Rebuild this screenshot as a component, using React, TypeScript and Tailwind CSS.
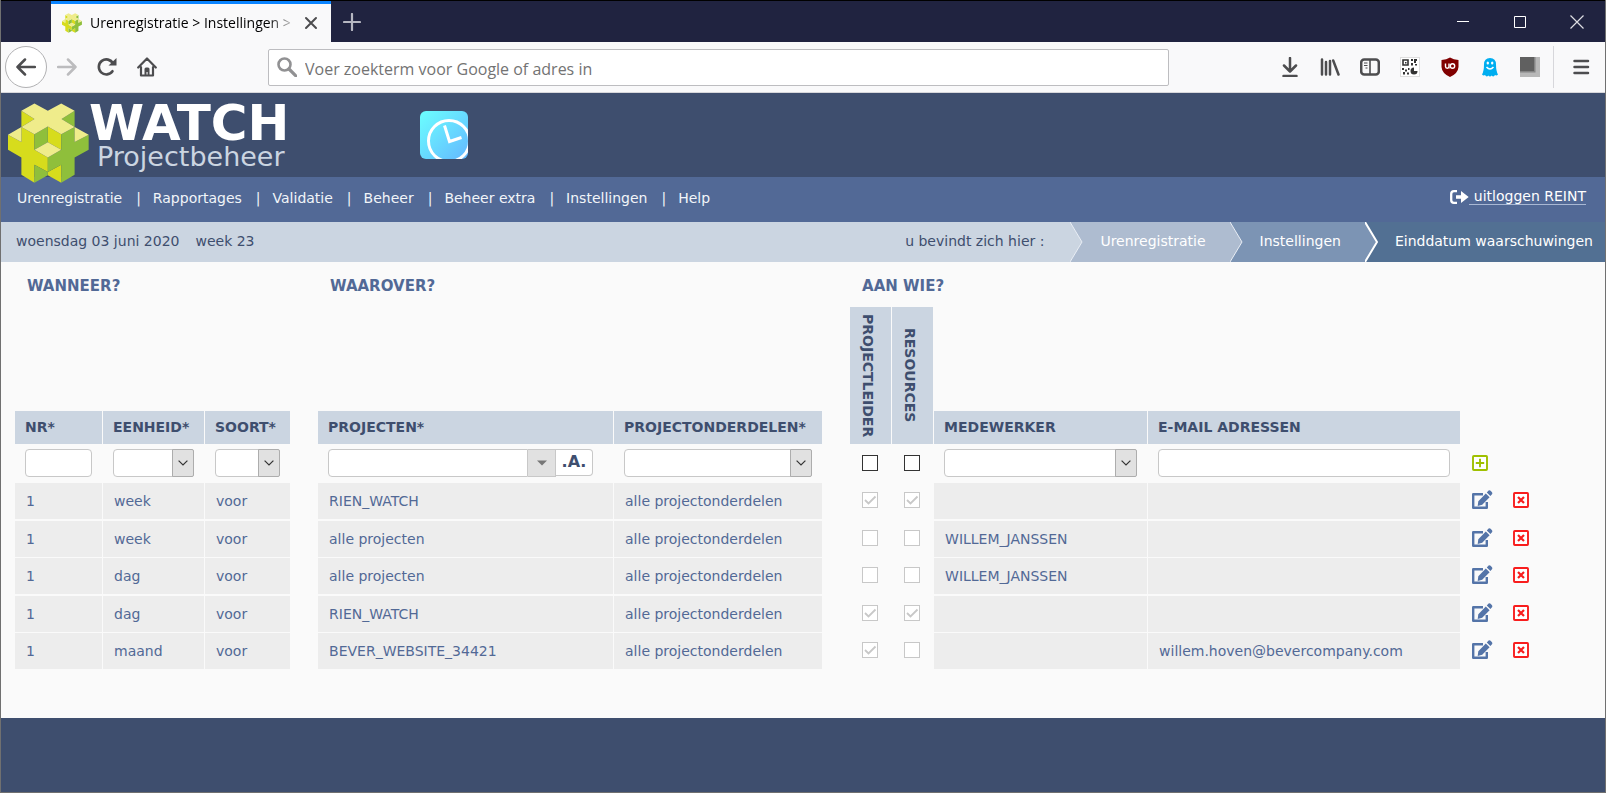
import React from 'react';

interface Rule {
  nr: string;
  unit: string;
  kind: string;
  project: string;
  part: string;
  leader: boolean;
  resources: boolean;
  employee: string;
  email: string;
}

const rules: Rule[] = [
  { nr: '1', unit: 'week', kind: 'voor', project: 'RIEN_WATCH', part: 'alle projectonderdelen', leader: true, resources: true, employee: '', email: '' },
  { nr: '1', unit: 'week', kind: 'voor', project: 'alle projecten', part: 'alle projectonderdelen', leader: false, resources: false, employee: 'WILLEM_JANSSEN', email: '' },
  { nr: '1', unit: 'dag', kind: 'voor', project: 'alle projecten', part: 'alle projectonderdelen', leader: false, resources: false, employee: 'WILLEM_JANSSEN', email: '' },
  { nr: '1', unit: 'dag', kind: 'voor', project: 'RIEN_WATCH', part: 'alle projectonderdelen', leader: true, resources: true, employee: '', email: '' },
  { nr: '1', unit: 'maand', kind: 'voor', project: 'BEVER_WEBSITE_34421', part: 'alle projectonderdelen', leader: true, resources: false, employee: '', email: 'willem.hoven@bevercompany.com' },
];

const menu = ['Urenregistratie', 'Rapportages', 'Validatie', 'Beheer', 'Beheer extra', 'Instellingen', 'Help'];

const Logo: React.FC<{ className: string }> = ({ className }) => (
  <svg viewBox="24 311 242 238" className={className} aria-hidden="true">
    {/* left faces */}
    <path fill="#d7dc1c" d="M64 334L103 358L64 382ZM24 405L64 427V382L103 404V450L143 473V517L103 495V549L64 525V473L24 450ZM143 381L183 404V450L143 428ZM183 495V549L143 526V517Z" />
    {/* right faces */}
    <path fill="#8fbf3b" d="M223 334L184 358L223 382ZM265 405L223 427V382L183 404V450L143 473V517L183 495V549L223 525V473L265 450ZM103 404L143 381V428L103 450ZM103 495L143 517V526L103 549Z" />
    {/* top faces */}
    <path fill="#efec8b" d="M103 312L143 334L183 312L223 334L184 358L223 382L183 404L143 381L103 404L64 382L103 358L64 334ZM24 405L64 382V427ZM265 405L223 382V427ZM103 450L143 428L183 450L143 473Z" />
  </svg>
);

const ClockIcon = () => (
  <svg viewBox="0 0 48 48" className="size-12" aria-hidden="true">
    <defs>
      <linearGradient id="clock" x1="0" y1="0" x2="1" y2="1">
        <stop offset="0" stopColor="#6bffff" />
        <stop offset="1" stopColor="#64b8ff" />
      </linearGradient>
      <clipPath id="clockClip">
        <rect width="48" height="48" rx="6" />
      </clipPath>
    </defs>
    <g clipPath="url(#clockClip)">
      <rect width="48" height="48" fill="url(#clock)" />
      <circle cx="29" cy="30" r="20.500" fill="none" stroke="#fff" strokeWidth="3" />
      <path d="M24.500 14.500L29.500 30.500L41.500 26.500" fill="none" stroke="#fff" strokeWidth="3" />
    </g>
  </svg>
);

const ToolButton: React.FC<{ label: string; children: React.ReactNode }> = ({ label, children }) => (
  <button type="button" aria-label={label} className="flex size-10 shrink-0 items-center justify-center">
    {children}
  </button>
);

const stroke = { fill: 'none', stroke: '#4d4d4f', strokeWidth: 2.5, strokeLinecap: 'round', strokeLinejoin: 'round' } as const;

const TitleBar = () => (
  <div className="flex h-[42px] items-stretch border-t border-black bg-[#202340] pl-[50px]">
    <div className="flex w-[280px] items-center border-t-3 border-[#0a84ff] bg-[#f9f9fa] pl-[11px] pr-2">
      <Logo className="size-5 shrink-0" />
      <span className="ml-2 flex-1 overflow-hidden whitespace-nowrap bg-linear-to-r from-black from-85% to-transparent bg-clip-text font-['Open_Sans',sans-serif] text-sm text-transparent">
        Urenregistratie &gt; Instellingen &gt;
      </span>
      <button type="button" aria-label="Tabblad sluiten" className="flex size-6 items-center justify-center">
        <svg viewBox="0 0 14 14" className="size-3.5">
          <path {...stroke} strokeWidth={2} d="M2 2L12 12M12 2L2 12" />
        </svg>
      </button>
    </div>
    <button type="button" aria-label="Nieuw tabblad" className="flex w-[42px] items-center justify-center">
      <svg viewBox="0 0 18 18" className="size-[18px]">
        <path d="M9 1V17M1 9H17" fill="none" stroke="#b6b7c1" strokeWidth="2.2" strokeLinecap="round" />
      </svg>
    </button>
    <div className="flex-1" />
    <button type="button" aria-label="Minimaliseren" className="flex w-[57px] items-center justify-center">
      <svg viewBox="0 0 14 14" className="size-3.5"><path d="M1 6.500H13" stroke="#fff" /></svg>
    </button>
    <button type="button" aria-label="Maximaliseren" className="flex w-[57px] items-center justify-center">
      <svg viewBox="0 0 14 14" className="size-3.5"><path d="M1.500 1.500H12.500V12.500H1.500Z" fill="none" stroke="#fff" /></svg>
    </button>
    <button type="button" aria-label="Sluiten" className="flex w-[57px] items-center justify-center">
      <svg viewBox="0 0 14 14" className="size-3.5"><path d="M.5 .5L13.500 13.500M13.500 .5L.5 13.500" fill="none" stroke="#dddde2" strokeWidth="1.200" /></svg>
    </button>
  </div>
);

const ToolBar = () => (
  <div className="flex h-[51px] items-center border-b border-[#d7d7db] bg-[#f9f9fa] px-1">
    <button type="button" aria-label="Terug" className="flex size-[42px] shrink-0 items-center justify-center rounded-full border border-[#b1b1b3] bg-white">
      <svg viewBox="0 0 20 20" className="size-5">
        <path {...stroke} d="M9 2.500L1.500 10L9 17.500M1.500 10H19" />
      </svg>
    </button>
    <ToolButton label="Vooruit">
      <svg viewBox="0 0 20 20" className="size-5">
        <path {...stroke} stroke="#bcbcbe" d="M11 2.500L18.500 10L11 17.500M18.500 10H1" />
      </svg>
    </ToolButton>
    <ToolButton label="Vernieuwen">
      <svg viewBox="0 0 20 20" className="size-5">
        <path {...stroke} strokeWidth={2.6} d="M15.500 14.200A7.500 7.500 0 1 1 16 6.500" />
        <path fill="#4d4d4f" d="M19.500 1V8.500H11.500Z" />
      </svg>
    </ToolButton>
    <ToolButton label="Startpagina">
      <svg viewBox="0 0 20 20" className="size-5">
        <path {...stroke} strokeWidth={2.2} d="M1.200 10.500L10 1.500L18.800 10.500M4 10V18.500H16V10" />
        <path fill="#4d4d4f" d="M7.500 18.500V12Q7.500 10.500 9 10.500H11Q12.500 10.500 12.500 12V18.500H10.600V15H9.500V18.500Z" />
      </svg>
    </ToolButton>
    <div className="mx-[101px] flex h-[37px] flex-1 items-center rounded-xs border border-[#bdbdc0] bg-white px-2">
      <svg viewBox="0 0 20 20" className="size-5 shrink-0" aria-hidden="true">
        <circle cx="7.500" cy="7.500" r="6" fill="none" stroke="#919193" strokeWidth="2.600" />
        <path d="M12 12L19 19" stroke="#919193" strokeWidth="3.200" strokeLinecap="round" />
      </svg>
      <input
        type="text"
        aria-label="Adresbalk"
        placeholder="Voer zoekterm voor Google of adres in"
        className="ml-2 w-full min-w-0 flex-1 bg-transparent pt-1 font-['Open_Sans',sans-serif] text-base text-gray-700 placeholder:text-[#737373] focus:outline-none"
      />
    </div>
    <ToolButton label="Downloads">
      <svg viewBox="0 0 20 20" className="size-5">
        <path {...stroke} d="M10 1V14M4 8.500L10 14.500L16 8.500M3.500 19H16.500" />
      </svg>
    </ToolButton>
    <ToolButton label="Bibliotheek">
      <svg viewBox="0 0 20 20" className="size-5">
        <path {...stroke} d="M2 2.500V17.500M6 5V17.500M10 4V17.500M13.200 3.500L18.500 17.500" />
      </svg>
    </ToolButton>
    <ToolButton label="Zijbalken">
      <svg viewBox="0 0 20 20" className="size-5">
        <rect x="1.200" y="2.500" width="17.600" height="15" rx="3" {...stroke} />
        <path d="M10 3V17" stroke="#4d4d4f" strokeWidth="1.600" />
        <path d="M4 6H7.500M4 8.500H7.500M5.500 11H7.500" stroke="#4d4d4f" strokeWidth="1.200" />
      </svg>
    </ToolButton>
    <ToolButton label="QR-code">
      <svg viewBox="0 0 20 20" className="size-5">
        <rect x=".5" y=".5" width="19" height="19" fill="#fff" stroke="#dedede" />
        <path d="M3 3H8V8H3Z" fill="none" stroke="#333" strokeWidth="1.600" />
        <path fill="#333" d="M5 5H6.500V6.500H5ZM11 2H13V4H11ZM11 6H13V8.500H11ZM14 2H17V4H16V6H14ZM15 7H17V8.500H15ZM2 11H4V13H2ZM5 12.500H7V14.500H5ZM8 11H9.500V13H8ZM3 15H5V17.500H3ZM7 15.500H9V17.500H7Z" />
        <path fill="#333" d="M14 10.500A3.500 3.500 0 1 0 17.500 14H14Z" />
      </svg>
    </ToolButton>
    <ToolButton label="uBlock">
      <svg viewBox="0 0 20 20" className="size-5">
        <path fill="#800000" d="M10 .5Q13.500 2.800 18.500 3V10Q18 16.500 10 20Q2 16.500 1.500 10V3Q6.500 2.800 10 .5Z" />
        <path d="M5.500 6.500V9.500A1.500 1.500 0 0 0 9 9.500V6.500M9 9V11.500" fill="none" stroke="#fff" strokeWidth="1.400" />
        <circle cx="12.500" cy="9" r="2.200" fill="none" stroke="#fff" strokeWidth="1.400" />
      </svg>
    </ToolButton>
    <ToolButton label="Ghostery">
      <svg viewBox="0 0 20 20" className="size-5">
        <path fill="#00aef0" d="M10 1Q16 1 16 7.500Q16 14 18 17.500Q16.500 19 15 18Q13.500 20.500 11.700 18.500Q10 20.500 8.300 18.500Q6.500 20.500 5 18Q3.500 19 2 17.500Q4 14 4 7.500Q4 1 10 1Z" />
        <ellipse cx="7.800" cy="6" rx="1.200" ry="1.600" fill="#fff" />
        <ellipse cx="12.200" cy="6" rx="1.200" ry="1.600" fill="#fff" />
        <path d="M6.500 10Q10 14 13.500 10" fill="none" stroke="#fff" strokeWidth="1.500" />
      </svg>
    </ToolButton>
    <ToolButton label="Extensie">
      <svg viewBox="0 0 20 20" className="size-5">
        <path fill="#b8b8b8" d="M0 0H20V20H0Z" />
        <path fill="#858585" d="M0 0H15.500V15.500H0Z" />
        <path fill="#606060" d="M0 0H14V14H0Z" />
      </svg>
    </ToolButton>
    <div className="mr-[7px] ml-[3px] h-[42px] w-px bg-[#d7d7db]" />
    <ToolButton label="Menu">
      <svg viewBox="0 0 20 20" className="size-5">
        <path {...stroke} d="M3.500 4H17M3.500 10H17M3.500 16H17" />
      </svg>
    </ToolButton>
  </div>
);

const Chevron: React.FC<{ from: string; to: string; line: string; width?: number }> = ({ from, to, line, width = 1 }) => (
  <svg viewBox="0 0 13 40" className="h-10 w-[13px] shrink-0" aria-hidden="true">
    <rect width="13" height="40" fill={to} />
    <path d="M0 0L12 20L0 40Z" fill={from} />
    <path d="M0 0L12 20L0 40" fill="none" stroke={line} strokeWidth={width} />
  </svg>
);

const SelectBox: React.FC<{ label: string }> = ({ label }) => (
  <div className="relative h-7">
    <select aria-label={label} className="size-full appearance-none rounded-sm border border-[#c8c8c8] bg-white pl-2 pr-6 text-[#3e4e6e]">
      <option value=""></option>
    </select>
    <span className="pointer-events-none absolute inset-y-0 right-0 flex w-[22px] items-center justify-center rounded-r-xs border border-[#adadad] bg-[#e1e1e1]">
      <svg viewBox="0 0 10 6" className="h-1.5 w-2.5">
        <path d="M.6 .6L5 5L9.400 .6" fill="none" stroke="#333" strokeWidth="1.200" />
      </svg>
    </span>
  </div>
);

const CheckCell: React.FC<{ label: string; checked: boolean }> = ({ label, checked }) => (
  <td className="pb-0.5 pl-3">
    <div className="relative size-4">
      <input type="checkbox" aria-label={label} checked={checked} disabled readOnly className="block size-4 appearance-none border border-[#c8c8c8] bg-white" />
      {checked && (
        <svg viewBox="0 0 16 16" className="pointer-events-none absolute inset-0 size-4">
          <path d="M3 8L6.500 11.500L13.500 4.500" fill="none" stroke="#c8c8c8" strokeWidth="1.800" />
        </svg>
      )}
    </div>
  </td>
);

const EditIcon = () => (
  <svg viewBox="0 0 21 19" className="h-[19px] w-[21px]" aria-hidden="true">
    <path d="M11 4.200H1.200V17.800H14.800V12" fill="none" stroke="#5474a8" strokeWidth="2.400" strokeLinejoin="round" />
    <path fill="#5474a8" d="M5.700 16L6.300 11.200L13.800 3.400L17.600 7.200L10.200 14.800ZM14.800 2.400L16.600 .6Q17.600 0 18.600 .8L20 2.300Q20.800 3.300 20 4.300L18.400 6.100Z" />
  </svg>
);

const DeleteIcon = () => (
  <svg viewBox="0 0 16 16" className="size-4" aria-hidden="true">
    <rect x="1" y="1" width="14" height="14" rx=".8" fill="#fff" stroke="#f81d1d" strokeWidth="1.900" />
    <path d="M5 5L11 11M11 5L5 11" stroke="#f81d1d" strokeWidth="2.200" />
  </svg>
);

const headCell = 'border-r border-[#fafafa] bg-[#cbd5e1] bg-clip-padding px-2.5 pb-0.5 text-left font-bold text-[#3e4e6e]';
const bodyCell = 'border-r border-[#fafafa] bg-[#ededed] bg-clip-padding pl-[11px]';
const textBox = 'block h-7 w-full rounded-sm border border-[#c8c8c8] bg-white px-2 text-[#3e4e6e]';
const upright = 'border-r border-[#fafafa] bg-[#cbd5e1] bg-clip-padding p-0 pr-1.5 text-[#3e4e6e]';

const RuleTable = () => (
  <table className="w-full table-fixed border-separate border-spacing-0 text-sm text-[#526996]">
    <colgroup>
      <col className="w-[88px]" />
      <col className="w-[102px]" />
      <col className="w-[86px]" />
      <col className="w-[27px]" />
      <col className="w-[296px]" />
      <col className="w-[209px]" />
      <col className="w-[27px]" />
      <col className="w-[42px]" />
      <col className="w-[42px]" />
      <col className="w-[214px]" />
      <col className="w-[313px]" />
      <col className="w-[41px]" />
      <col />
    </colgroup>
    <thead>
      <tr className="h-[45px] text-left text-[15px] text-[#526996]">
        <th colSpan={4} className="pt-1 pl-3">WANNEER?</th>
        <th colSpan={3} className="pt-1 pl-3">WAAROVER?</th>
        <th colSpan={6} className="pt-1 pl-3">AAN WIE?</th>
      </tr>
      <tr className="h-[104px]">
        <td colSpan={7}></td>
        <th rowSpan={2} className={upright}>
          <span className="inline-block align-middle leading-5 [writing-mode:vertical-rl]">PROJECTLEIDER</span>
        </th>
        <th rowSpan={2} className={upright}>
          <span className="inline-block align-middle leading-5 [writing-mode:vertical-rl]">RESOURCES</span>
        </th>
        <td colSpan={4}></td>
      </tr>
      <tr className="h-[33px]">
        <th className={headCell}>NR*</th>
        <th className={headCell}>EENHEID*</th>
        <th className={headCell}>SOORT*</th>
        <td></td>
        <th className={headCell}>PROJECTEN*</th>
        <th className={headCell}>PROJECTONDERDELEN*</th>
        <td></td>
        <th className={headCell}>MEDEWERKER</th>
        <th className={headCell}>E-MAIL ADRESSEN</th>
        <td colSpan={2}></td>
      </tr>
    </thead>
    <tbody>
      <tr className="h-[39px] *:pr-[11px] *:pb-0.5 *:pl-2.5">
        <td><input type="text" aria-label="Nr" className={textBox} /></td>
        <td><SelectBox label="Eenheid" /></td>
        <td><SelectBox label="Soort" /></td>
        <td></td>
        <td>
          <div className="flex h-7 pr-2.5">
            <input type="text" aria-label="Projecten" className="h-7 w-full min-w-0 flex-1 rounded-l-sm border border-[#c8c8c8] bg-white px-2 text-[#3e4e6e]" />
            <button type="button" aria-label="Projecten tonen" className="flex w-7 items-center justify-center border-y border-r border-[#c8c8c8] bg-[#e1e1e1]">
              <svg viewBox="0 0 10 6" className="h-1.5 w-2.5"><path d="M0 .5H10L5 5.500Z" fill="#777" /></svg>
            </button>
            <button type="button" className="h-[27px] w-[37px] rounded-r-sm border-y border-r border-[#c8c8c8] bg-white text-base leading-6 font-bold text-[#3e4e6e]">.A.</button>
          </div>
        </td>
        <td><SelectBox label="Projectonderdelen" /></td>
        <td></td>
        <td><input type="checkbox" aria-label="Projectleider" className="ml-0.5 block size-4 appearance-none border border-[#333] bg-white" /></td>
        <td><input type="checkbox" aria-label="Resources" className="ml-0.5 block size-4 appearance-none border border-[#333] bg-white" /></td>
        <td><SelectBox label="Medewerker" /></td>
        <td><input type="text" aria-label="E-mail adressen" className={textBox} /></td>
        <td colSpan={2}>
          <button type="button" aria-label="Toevoegen" className="ml-px block">
            <svg viewBox="0 0 16 16" className="size-4">
              <rect x="1" y="1" width="14" height="14" rx=".8" fill="#fff" stroke="#9fc000" strokeWidth="1.900" />
              <path d="M8 3.800V12.200M3.800 8H12.200" stroke="#9fc000" strokeWidth="1.900" />
            </svg>
          </button>
        </td>
      </tr>
      {rules.map((rule, i) => (
        <tr key={i} className="h-[38px] *:border-[#fafafa] even:*:border-b-2 odd:h-[37px] odd:*:border-b">
          <td className={bodyCell}>{rule.nr}</td>
          <td className={bodyCell}>{rule.unit}</td>
          <td className={bodyCell}>{rule.kind}</td>
          <td></td>
          <td className={bodyCell}>{rule.project}</td>
          <td className={bodyCell}>{rule.part}</td>
          <td></td>
          <CheckCell label="Projectleider" checked={rule.leader} />
          <CheckCell label="Resources" checked={rule.resources} />
          <td className={bodyCell}>{rule.employee}</td>
          <td className={bodyCell}>{rule.email}</td>
          <td className="pb-1 pl-[11px]">
            <button type="button" aria-label="Wijzigen" className="block"><EditIcon /></button>
          </td>
          <td className="pb-0.5 pl-[11px]">
            <button type="button" aria-label="Verwijderen" className="block"><DeleteIcon /></button>
          </td>
        </tr>
      ))}
    </tbody>
  </table>
);

const App: React.FC = () => {
  return (
    <div className="flex min-h-screen flex-col border-x border-b border-[#707070] bg-[#3e4e6e] font-['DejaVu_Sans',Verdana,sans-serif] text-sm">
      <TitleBar />
      <ToolBar />

      <header className="flex h-[84px] items-start bg-[#3e4e6e] pl-[7px]">
        <a href="#" className="z-10 flex text-white">
          <Logo className="mt-2.5 h-20 w-[81px] shrink-0" />
          <span className="flex flex-col pt-2.5">
            <span className="text-[50px] leading-10 font-bold">WATCH</span>
            <span className="ml-2 text-[27px] leading-7 text-[#cbd5e1]">Projectbeheer</span>
          </span>
        </a>
        <div className="mt-[18px] ml-[131px]">
          <ClockIcon />
        </div>
      </header>

      <nav className="flex h-[45px] items-start justify-between bg-[#526996] pt-[11px] pr-[19px] pl-4 leading-5 text-[#f1f5f9]">
        <ul className="flex">
          {menu.map((item, i) => (
            <li key={item} className="flex">
              {i > 0 && <span className="mr-3 ml-3.5">|</span>}
              <a href="#">{item}</a>
            </li>
          ))}
        </ul>
        <a href="#" className="flex items-center text-white">
          <svg viewBox="0 0 19 14" className="h-3.5 w-[19px]" aria-hidden="true">
            <path d="M7 1.200H4Q1.200 1.200 1.200 4V10Q1.200 12.800 4 12.800H7" fill="none" stroke="#fff" strokeWidth="2.300" />
            <path fill="#fff" d="M6 5.300H11V1L18.700 7L11 13V8.700H6Z" />
          </svg>
          <span className="border-b border-[#a9b8d4] leading-4 whitespace-pre">{' uitloggen REINT'}</span>
        </a>
      </nav>

      <div className="flex h-10 items-center bg-[#cbd5e1] text-[#3e4e6e] *:pb-0.5 [&>svg]:pb-0">
        <span className="ml-[15px]">woensdag 03 juni 2020</span>
        <span className="ml-4 flex-1">week 23</span>
        <span className="mr-[26px]">u bevindt zich hier :</span>
        <Chevron from="#cbd5e1" to="#aebcd0" line="#e8edf4" />
        <a href="#" className="flex h-10 items-center bg-[#aebcd0] pr-6 pl-[17px] text-white">Urenregistratie</a>
        <Chevron from="#aebcd0" to="#7c94b4" line="#e8edf4" />
        <a href="#" className="flex h-10 items-center bg-[#7c94b4] pr-6 pl-[17px] text-white">Instellingen</a>
        <Chevron from="#7c94b4" to="#527093" line="#ffffff" width={2} />
        <a href="#" className="flex h-10 items-center bg-[#527093] pr-3 pl-[17px] text-white">Einddatum waarschuwingen</a>
      </div>

      <main className="bg-[#fafafa] pb-[47px] pl-3.5">
        <RuleTable />
      </main>
    </div>
  );
};

export default App;
